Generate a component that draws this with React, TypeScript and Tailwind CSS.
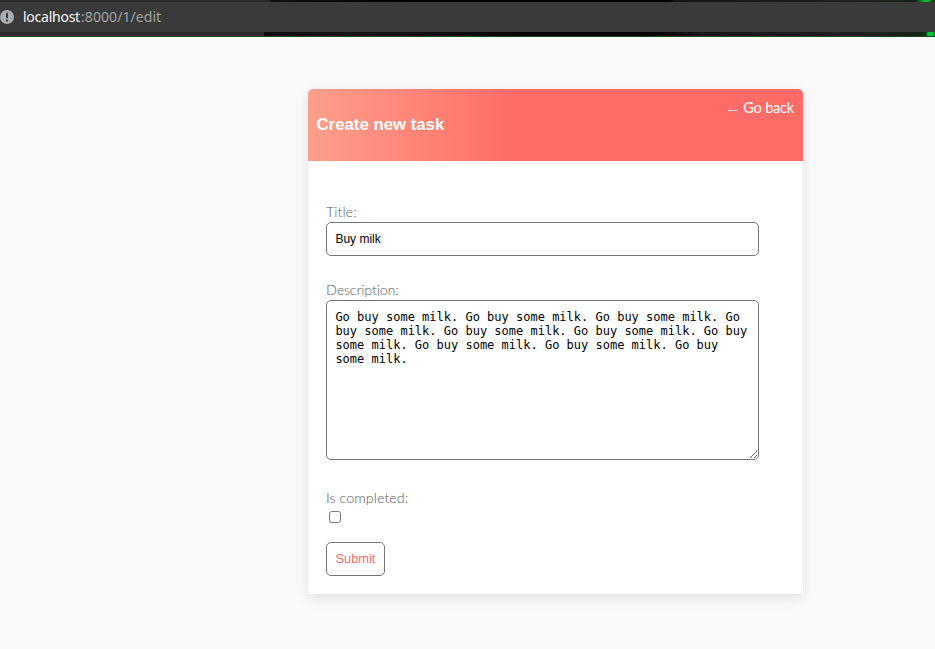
import React from 'react';

const label = "relative -top-px block h-[19px] w-fit whitespace-nowrap font-['Lato',sans-serif] font-light leading-[19px] text-[#5c5c5c] [font-variant-ligatures:none]";
const field = 'block w-[433px] rounded-[5px] border border-[#767676] bg-white px-[8.4px] text-[12px] text-black outline-none';

function AddressBar() {
  return (
    <header className="flex h-[37px] flex-col">
      <div className="h-[2px] bg-[linear-gradient(to_right,#292929_0,#292929_270px,#101010_270px,#000_420px,#000_670px,#151515_675px,#202020_860px,#182018_915px,#00b427_924px,#00b427_929px,#063a0d_932px)]" />
      <div className="flex h-[30px] items-center bg-[#3a3a3a]">
        <svg className="block h-[14px] w-[14px]" viewBox="0 0 14 14">
          <circle cx="7" cy="7" r="7" fill="#a7afb5" />
          <rect x="6" y="2.7" width="2" height="5.6" rx=".6" fill="#3a3a3a" />
          <rect x="6" y="9.5" width="2" height="2" rx=".5" fill="#3a3a3a" />
        </svg>
        <p className="ml-[9px] whitespace-nowrap font-['Noto_Sans',sans-serif] text-[14px] leading-[20px] text-[#a3a3a3]">
          <span className="inline-block w-[58px] tracking-[-0.25px] text-[#f8f8f8]">localhost</span>
          <span className="tracking-[0.07px]">:8000/1/edit</span>
        </p>
      </div>
      <div className="h-[4px] bg-[linear-gradient(to_right,#2b2b2b_0,#2b2b2b_264px,#0e0e0e_264px,#151515_345px,#141414_400px,#000_550px,#000_640px,#151515_700px,#202020_860px,#182018_920px,#063a0d_926px,#00c43b_928px,#00c43b_933px,#064a15_935px)]" />
      <div className="h-px bg-[#1d451f]" />
    </header>
  );
}

export default function App() {
  return (
    <div className="h-[649px] overflow-hidden bg-[#fafafa] font-['Liberation_Sans',Arial,sans-serif]">
      <AddressBar />
      <main className="ml-[308px] mt-[52px] h-[505px] w-[495px] rounded-t-[5px] bg-white shadow-[0_4px_14px_rgba(0,0,0,0.1)]">
        <div className="flex h-[72px] items-start justify-between rounded-t-[5px] bg-[linear-gradient(to_right,#fc9f8a_0,#ff6b67_212px)] pl-[8.5px] pr-[9px] text-white">
          <h1 className="mt-[26px] whitespace-nowrap text-[16.8px] font-bold leading-[20px]">Create new task</h1>
          <a href="#" className="mt-[9px] flex items-center whitespace-nowrap font-['Lato',sans-serif] text-[14.4px] leading-[20px]">
            <svg className="mr-[5px] mt-[4px] h-[7px] w-[10px]" viewBox="0 0 10 7" fill="none" stroke="currentColor" strokeOpacity=".8" strokeWidth=".8">
              <path d="M.5 3.5H9.5M2.5 2L.7 3.5L2.5 5" />
            </svg>
            <span className="tracking-[-0.14px]">Go back</span>
          </a>
        </div>
        <form className="flex flex-col items-start px-[18px] pt-[42px]" onSubmit={(e) => e.preventDefault()}>
          <label htmlFor="title" className={`${label} text-[14.4px]`}>Title:</label>
          <input id="title" defaultValue="Buy milk" className={`${field} h-[34px]`} />
          <label htmlFor="description" className={`${label} mt-[25px] text-[14.4px] tracking-[-0.2px]`}>Description:</label>
          <textarea
            id="description"
            spellCheck={false}
            className={`${field} h-[160px] resize py-[9px] font-['DejaVu_Sans_Mono',monospace] leading-[14px]`}
            defaultValue="Go buy some milk. Go buy some milk. Go buy some milk. Go buy some milk. Go buy some milk. Go buy some milk. Go buy some milk. Go buy some milk. Go buy some milk. Go buy some milk."
          />
          <label htmlFor="completed" className={`${label} mt-[29px] text-[14.4px]`}>Is completed:</label>
          <input id="completed" type="checkbox" className="ml-[3px] mt-[3px] h-[12px] w-[12px] appearance-none rounded-[2.5px] border border-[#767676] bg-white" />
          <button className="mt-[19px] h-[34px] w-[59px] rounded-[5px] border border-[#767676] bg-white text-[12.8px] text-[#ff6b6b]">Submit</button>
        </form>
      </main>
    </div>
  );
}
